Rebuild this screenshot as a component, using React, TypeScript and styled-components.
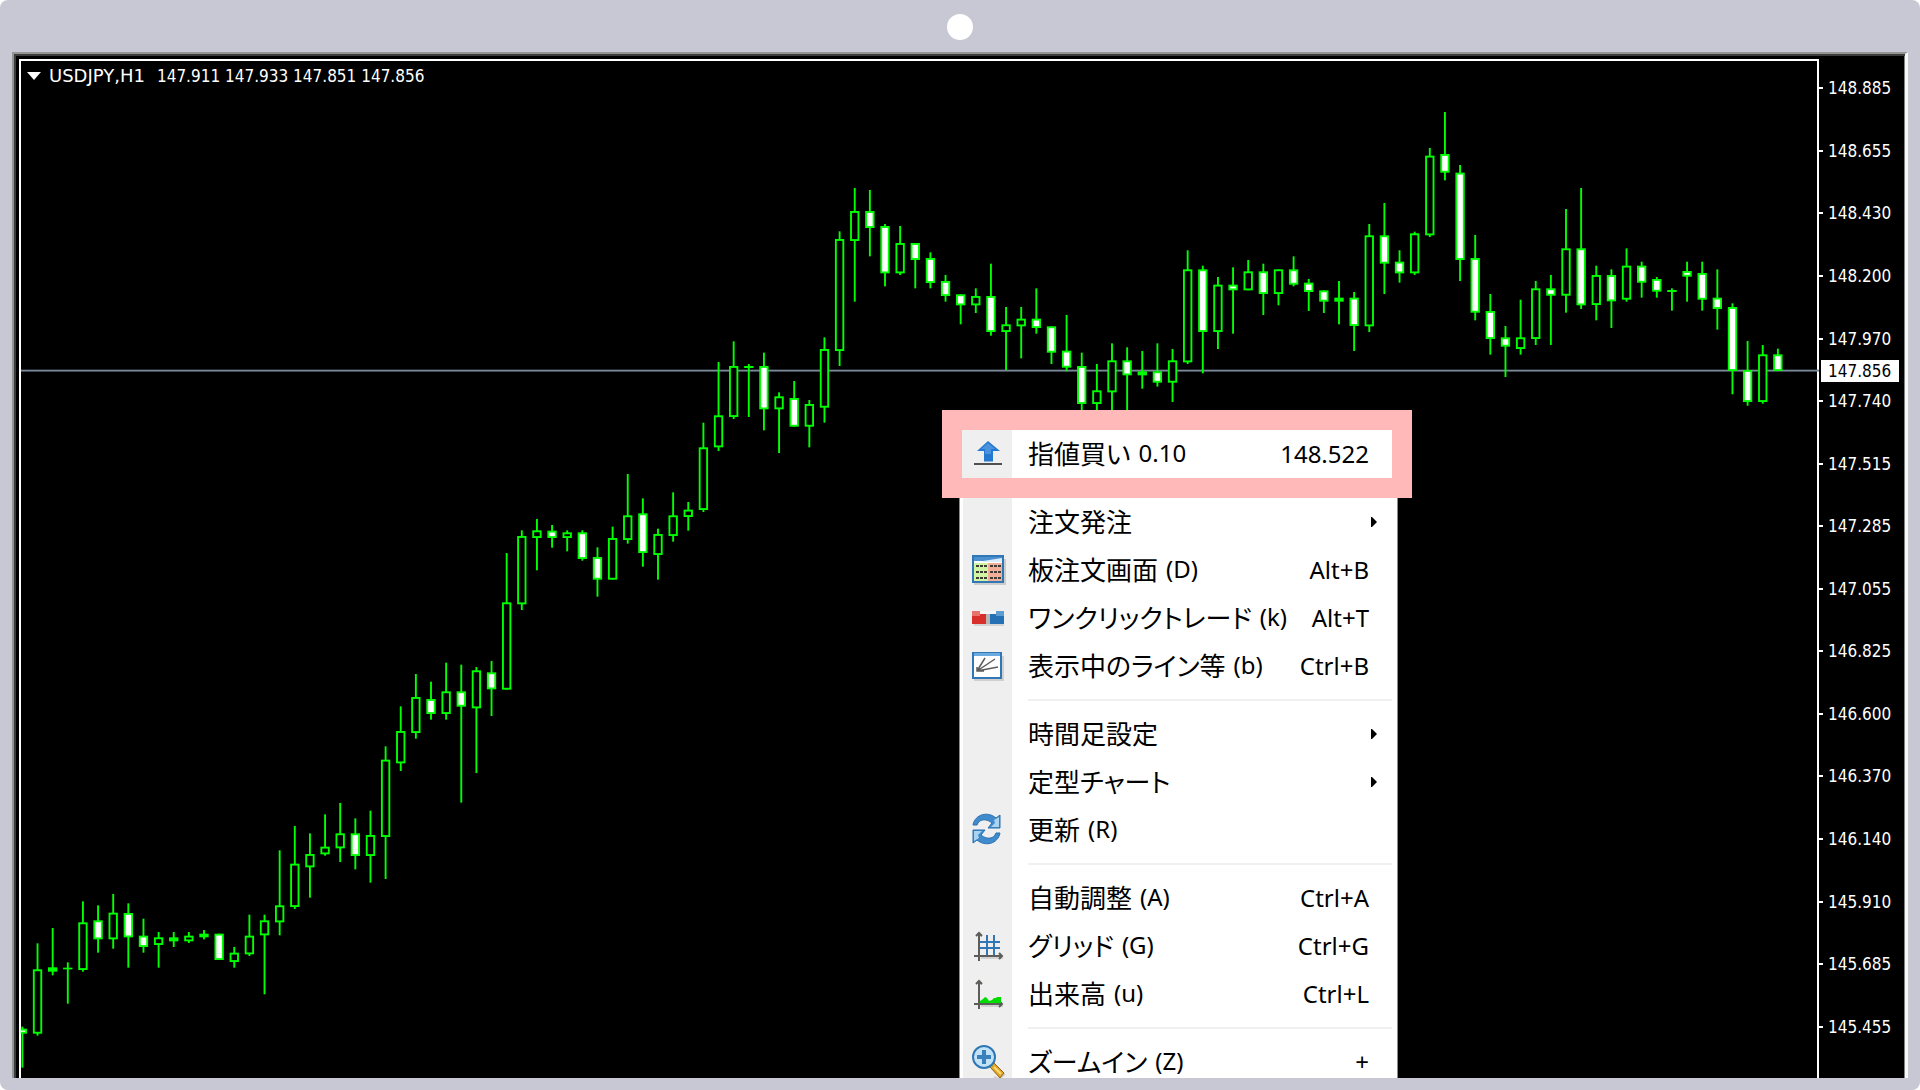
import React from "react";
import styled, { createGlobalStyle, css } from "styled-components";

const GlobalStyle = createGlobalStyle`
  *, *::before, *::after { box-sizing: border-box; }
  body { margin: 0; background: #fff; }
  button { appearance: none; border: 0; margin: 0; padding: 0; background: none; color: inherit; font: inherit; text-align: left; cursor: pointer; }
  ul { margin: 0; padding: 0; list-style: none; }
`;

const chartFont = css`
  font-family: "DejaVu Sans Condensed", "Noto Sans", sans-serif;
  font-size: 17px;
  line-height: 20px;
`;

/* ---------- device frame ---------- */

const Frame = styled.main`
  position: relative;
  display: flex;
  flex-direction: column;
  height: 100vh;
  min-height: 480px;
  padding: 0 12px 12px;
  border-radius: 8px;
  background: #c8c8d4;
  overflow: hidden;
`;

const TopBezel = styled.div`
  display: flex;
  justify-content: center;
  align-items: center;
  flex: 0 0 52px;
  padding-top: 2px;
`;

const Camera = styled.span`
  width: 26px;
  height: 26px;
  border-radius: 50%;
  background: #fff;
`;

const Screen = styled.section`
  position: relative;
  display: flex;
  flex: 1;
  min-height: 0;
  padding: 3px 0 0 3px;
  border: solid #949494;
  border-width: 2px 3px 0 2px;
  border-right-color: #f8f8f8;
  background: #000;
  box-shadow: inset 2px 2px 0 #3c3c3c, inset -1px 0 0 #808080;
  color: #fff;
  overflow: hidden;
`;

const Plot = styled.div`
  display: flex;
  flex-direction: column;
  flex: 1;
  min-width: 0;
  margin: 2px 0 0 2px;
  border: solid #fff;
  border-width: 2px 2px 0 2px;
`;

const PlotArea = styled.div`
  position: relative;
  flex: 1;
  min-height: 0;
`;

const SymbolBar = styled.button`
  ${chartFont}
  position: absolute;
  top: 5px;
  left: 6px;
  display: flex;
  align-items: center;
  white-space: pre;
`;

const SymbolName = styled.span`
  margin: 0 12px 0 8px;
  font-family: "DejaVu Sans", sans-serif;
  font-size: 18px;
`;

const Candles = styled.svg`
  display: block;
  width: 100%;
  height: 100%;
  overflow: visible;
`;

const Axis = styled.aside`
  position: relative;
  flex: 0 0 86px;
  padding-bottom: 20px;
`;

const Scale = styled.ul`
  ${chartFont}
  display: grid;
  grid-auto-rows: 1fr;
  height: 100%;
`;

const Tick = styled.li`
  display: flex;
  align-items: center;
  gap: 5px;

  &::before {
    content: "";
    width: 4px;
    height: 2px;
    background: #fff;
  }
`;

const CurrentPrice = styled.output`
  ${chartFont}
  position: absolute;
  top: 303px;
  left: 2px;
  width: 78px;
  padding: 1px 7px;
  background: #fff;
  color: #000;
`;

/* ---------- context menu ---------- */

const Menu = styled.div`
  position: absolute;
  top: 356px;
  left: 928px;
  width: 470px;
  color: #000;
`;

const IconCell = styled.span`
  display: flex;
  flex: 0 0 49px;
  align-items: center;
  justify-content: center;
  align-self: stretch;
  background: #efefef;
`;

const Highlight = styled.div`
  position: relative;
  border: 20px solid #ffb9b9;
  background: #fff;

  ${IconCell} {
    flex-basis: 50px;
    padding-left: 1px;
  }
`;

const MenuList = styled.ul`
  margin: 0 14px 0 17px;
  padding: 0 5px 0 3px;
  border: solid #8a8a8a;
  border-width: 0 1px;
  background: #fff;
`;

const Row = styled.li`
  display: flex;
`;

const Item = styled.button`
  display: flex;
  align-items: center;
  width: 100%;
  height: 48px;
  padding-right: 23px;
`;

const Label = styled.span`
  flex: 1;
  display: flex;
  align-items: center;
  gap: 8px;
  padding: 0 0 2px 16px;
  font: 26px/30px "Noto Sans CJK JP", sans-serif;
  font-feature-settings: "palt";
  white-space: nowrap;
`;

const Latin = styled.span`
  font: 24px/30px "Noto Sans", "Open Sans", sans-serif;
  white-space: nowrap;
`;

const Submenu = styled.svg`
  width: 6px;
  height: 10px;
  margin-right: -8px;
`;

const Divider = styled.li`
  display: flex;
  align-items: center;
  height: 20px;
  gap: 16px;

  &::after {
    content: "";
    flex: 1;
    height: 2px;
    background: #f0f0f0;
  }
`;

const Icon = styled.svg`
  flex: none;
  width: 36px;
  height: 36px;
`;

type IconName = "buy" | "depth" | "oneClick" | "objects" | "refresh" | "grid" | "volume" | "zoom";

const axes = (
  <>
    <path d="M11 30h22M11 7v2" stroke="#d2d2d2" strokeWidth="2" />
    <path d="M9 5v28M4 28h28M6 8l3-3 3 3M29 25l3 3-3 3" fill="none" stroke="#5c5c58" strokeWidth="2" />
  </>
);

const icons: Record<IconName, React.ReactNode> = {
  buy: (
    <>
      <path d="M18 5 30 15h-7v10.500h-9V15H7z" fill="#2478d0" />
      <path d="M18 7l7 6h-4v5h-6v-5h-4z" fill="#4a92de" />
      <path d="M4 28h28" stroke="#505050" strokeWidth="2" />
    </>
  ),
  depth: (
    <>
      <path d="M4 32h31V7" fill="none" stroke="#ccc" strokeWidth="2" />
      <rect x="3" y="4" width="30" height="26" fill="#fff" stroke="#2f77b5" strokeWidth="2" />
      <path d="M4 5h28v4H4z" fill="#4a90cf" />
      <path d="M13 9l19-3v4H13z" fill="#d8ecfa" />
      <path d="M4 11h14v18H4z" fill="#d2f5a4" />
      <path d="M18 11h14v18H18z" fill="#f3ae9a" />
      <path d="M6 14h11M20 14h11M6 20h11M20 20h11M6 26h11M20 26h11" stroke="#3c3c34" strokeWidth="2" strokeDasharray="3 1" />
    </>
  ),
  oneClick: (
    <>
      <path d="M4 25h30" stroke="#d4d4d4" strokeWidth="2" />
      <path d="M2 11h15v13H2z" fill="#d92f2b" />
      <path d="M2 11h8v5H2z" fill="#e8736c" />
      <path d="M19 11h15v13H19z" fill="#256fb4" />
      <path d="M26 11h8v5h-8z" fill="#5d9bd0" />
      <path d="M10 11h16v3H10z" fill="#f6f6f6" />
      <path d="M16 14h4v10h-4z" fill="#b8b8b8" />
    </>
  ),
  objects: (
    <>
      <path d="M4 32h29V8" fill="none" stroke="#d0d0d0" strokeWidth="2" />
      <rect x="3" y="5" width="28" height="25" fill="#fff" stroke="#2f77b5" strokeWidth="2" />
      <path d="M4 5h26v3H4z" fill="#6aaade" />
      <path d="M7 23 28 19M7 23 25 11M7 23 15 10M7 19v4h7" fill="none" stroke="#5c5c5c" strokeWidth="1.500" />
    </>
  ),
  refresh: (
    <>
      <path d="M3 13C5 2 18-1 26 6l4-3v13H18l4-5C16 6 9 7 7 13z" fill="#3f8bcb" stroke="#2a70b0" />
      <path d="M24 8l5-3v10h-8l4-4z" fill="#a9d3f0" />
      <path d="M30 21C28 32 15 35 7 28l-4 3V18h12l-4 5c6 5 13 4 15-2z" fill="#3f8bcb" stroke="#2a70b0" />
      <path d="M9 26l-5 3V19h8l-4 4z" fill="#a9d3f0" />
    </>
  ),
  grid: (
    <>
      <path d="M17 7v20M24 7v20M10 14h20M10 20h20" stroke="#2f77b5" strokeWidth="2" />
      {axes}
    </>
  ),
  volume: (
    <>
      {axes}
      <path d="M10 27v-2l3-2 2-2 2 1 2 3 3-1 2-2h2l1-1h4v6z" fill="#00dc00" />
    </>
  ),
  zoom: (
    <>
      <path d="M24 33l5 2 6-5" fill="none" stroke="#d0d0d0" strokeWidth="2" />
      <path d="M20 23l4-4 10 10-4 5z" fill="#e2a520" stroke="#8f6415" />
      <path d="M24 23l7 7" stroke="#f8dc80" strokeWidth="2" />
      <circle cx="14" cy="13" r="11" fill="#c2e2f6" stroke="#2f77b5" strokeWidth="2" />
      <path d="M14 6v14M7 13h14" stroke="#3a80ba" strokeWidth="4" />
    </>
  ),
};

type Entry =
  | { kind: "divider" }
  | { kind: "item"; icon?: IconName; name: string; suffix?: string; shortcut?: string; submenu?: boolean };

const featured: Entry = { kind: "item", icon: "buy", name: "指値買い", suffix: "0.10", shortcut: "148.522" };

const entries: Entry[] = [
  { kind: "item", name: "注文発注", submenu: true },
  { kind: "item", icon: "depth", name: "板注文画面", suffix: "(D)", shortcut: "Alt+B" },
  { kind: "item", icon: "oneClick", name: "ワンクリックトレード", suffix: "(k)", shortcut: "Alt+T" },
  { kind: "item", icon: "objects", name: "表示中のライン等", suffix: "(b)", shortcut: "Ctrl+B" },
  { kind: "divider" },
  { kind: "item", name: "時間足設定", submenu: true },
  { kind: "item", name: "定型チャート", submenu: true },
  { kind: "item", icon: "refresh", name: "更新", suffix: "(R)" },
  { kind: "divider" },
  { kind: "item", name: "自動調整", suffix: "(A)", shortcut: "Ctrl+A" },
  { kind: "item", icon: "grid", name: "グリッド", suffix: "(G)", shortcut: "Ctrl+G" },
  { kind: "item", icon: "volume", name: "出来高", suffix: "(u)", shortcut: "Ctrl+L" },
  { kind: "divider" },
  { kind: "item", icon: "zoom", name: "ズームイン", suffix: "(Z)", shortcut: "+" },
];

function MenuEntry({ entry }: { entry: Entry }) {
  if (entry.kind === "divider") return null;
  return (
    <Item type="button" role="menuitem">
      <IconCell>
        {entry.icon && (
          <Icon viewBox="0 0 36 36" aria-hidden="true">
            {icons[entry.icon]}
          </Icon>
        )}
      </IconCell>
      <Label>
        {entry.name}
        {entry.suffix && <Latin>{entry.suffix}</Latin>}
      </Label>
      {entry.shortcut && <Latin>{entry.shortcut}</Latin>}
      {entry.submenu && (
        <Submenu viewBox="0 0 6 10" aria-hidden="true">
          <path d="M0 0h1l5 5-5 5H0z" />
        </Submenu>
      )}
    </Item>
  );
}

/* ---------- price series ---------- */

// Body styles: 0 rising (hollow), 1 falling (white), 2 flat (solid line).
type Candle = [high: number, top: number, bottom: number, low: number, style: 0 | 1 | 2];

// Vertical positions in thirds of a pixel, measured from the top of the window.
const series: Candle[] = [
  [3080, 3086, 3101, 3203, 1], [2830, 2908, 3101, 3107, 0], [2784, 2902, 2915, 2926, 2], [2887, 2903, 2908, 3011, 2],
  [2704, 2767, 2910, 2915, 0], [2716, 2761, 2818, 2858, 1], [2682, 2738, 2818, 2846, 0], [2710, 2739, 2812, 2903, 1],
  [2756, 2807, 2841, 2858, 1], [2796, 2812, 2835, 2903, 0], [2796, 2812, 2824, 2841, 2], [2796, 2807, 2824, 2829, 0],
  [2790, 2801, 2812, 2818, 2], [2801, 2801, 2880, 2880, 1], [2841, 2858, 2886, 2903, 0], [2744, 2807, 2863, 2868, 0],
  [2744, 2761, 2806, 2983, 0], [2551, 2716, 2767, 2806, 0], [2478, 2591, 2721, 2727, 0], [2500, 2562, 2602, 2693, 0],
  [2443, 2540, 2563, 2567, 0], [2409, 2500, 2545, 2586, 0], [2455, 2500, 2568, 2608, 1], [2432, 2505, 2568, 2648, 0],
  [2239, 2279, 2511, 2637, 0], [2119, 2193, 2290, 2313, 0], [2022, 2091, 2199, 2216, 0], [2045, 2097, 2142, 2159, 1],
  [1988, 2074, 2142, 2159, 0], [1994, 2074, 2120, 2408, 1], [2001, 2011, 2125, 2319, 0], [1983, 2017, 2068, 2148, 1],
  [1659, 1807, 2069, 2069, 0], [1591, 1608, 1813, 1830, 0], [1557, 1591, 1614, 1711, 0], [1575, 1592, 1614, 1643, 1],
  [1591, 1597, 1614, 1654, 0], [1591, 1597, 1677, 1682, 1], [1642, 1671, 1739, 1790, 1], [1580, 1614, 1739, 1739, 0],
  [1422, 1546, 1620, 1631, 0], [1495, 1540, 1659, 1700, 1], [1586, 1602, 1665, 1739, 0], [1477, 1546, 1608, 1625, 0],
  [1506, 1529, 1551, 1592, 0], [1268, 1342, 1530, 1536, 0], [1086, 1246, 1342, 1353, 0], [1024, 1098, 1251, 1257, 0],
  [1092, 1098, 1104, 1251, 2], [1058, 1098, 1228, 1291, 1], [1177, 1189, 1228, 1359, 0], [1143, 1194, 1280, 1280, 1],
  [1200, 1212, 1280, 1342, 0], [1012, 1047, 1223, 1268, 0], [694, 717, 1053, 1098, 0], [564, 633, 723, 905, 0],
  [570, 633, 684, 769, 1], [672, 678, 820, 859, 1], [678, 729, 820, 825, 0], [729, 729, 780, 865, 1],
  [757, 774, 849, 865, 1], [825, 843, 888, 905, 1], [883, 883, 916, 973, 1], [865, 888, 916, 939, 0],
  [791, 888, 996, 1007, 1], [921, 973, 996, 1110, 0], [921, 956, 979, 1075, 0], [865, 956, 984, 1001, 1],
  [979, 979, 1058, 1092, 1], [945, 1052, 1103, 1114, 1], [1058, 1098, 1212, 1250, 1], [1092, 1171, 1212, 1250, 0],
  [1030, 1081, 1177, 1250, 0], [1042, 1081, 1126, 1250, 1], [1053, 1114, 1126, 1166, 2], [1030, 1114, 1148, 1160, 1],
  [1047, 1081, 1148, 1206, 0], [751, 808, 1087, 1092, 0], [797, 808, 996, 1120, 1], [831, 854, 996, 1047, 0],
  [802, 854, 871, 1001, 1], [780, 814, 871, 871, 0], [791, 814, 882, 945, 1], [808, 808, 882, 916, 0],
  [769, 808, 854, 859, 1], [837, 848, 876, 933, 1], [871, 871, 905, 939, 1], [843, 893, 905, 973, 2],
  [876, 893, 978, 1053, 1], [672, 706, 979, 996, 0], [609, 706, 791, 882, 1], [751, 785, 820, 848, 1],
  [695, 700, 820, 825, 0], [444, 467, 706, 711, 0], [336, 462, 518, 541, 1], [495, 518, 780, 843, 1],
  [705, 774, 938, 961, 1], [882, 933, 1017, 1064, 1], [978, 1012, 1040, 1131, 1], [899, 1012, 1047, 1064, 0],
  [843, 865, 1017, 1035, 0], [825, 865, 887, 1035, 1], [627, 745, 887, 938, 0], [564, 745, 916, 927, 1],
  [797, 825, 915, 961, 0], [808, 825, 904, 984, 1], [745, 797, 899, 905, 0], [785, 797, 848, 893, 1],
  [831, 837, 875, 893, 1], [865, 870, 876, 932, 2], [785, 813, 830, 905, 1], [785, 819, 899, 932, 1],
  [808, 893, 927, 989, 1], [910, 921, 1113, 1183, 1], [1023, 1110, 1206, 1217, 1], [1035, 1063, 1206, 1211, 0],
  [1046, 1063, 1113, 1113, 1],
];

const STEP = 45.4;
const FIRST = 67.2;
const BODY = 28;
const LINE = 5.67;
const fills = ["#000", "#fff", "#0f0"];

function CandleShape({ index, candle }: { index: number; candle: Candle }) {
  const [high, top, bottom, low, style] = candle;
  const x = FIRST + index * STEP;
  // The oldest candle is cut off by the left edge of the plot.
  const left = index === 0 ? 62 : x - BODY / 2;
  const width = x + BODY / 2 - left;
  const inner = Math.max(0, bottom - top - LINE * 2);
  return (
    <g>
      <rect x={x - LINE / 2} y={high} width={LINE} height={low - high} fill="#0f0" />
      <rect x={left} y={top} width={width} height={bottom - top} fill="#0f0" />
      {style !== 2 && (
        <rect
          x={index === 0 ? left : left + LINE}
          y={top + LINE}
          width={index === 0 ? width - LINE : width - LINE * 2}
          height={inner}
          fill={fills[style]}
        />
      )}
    </g>
  );
}

const ticks = [
  "148.885", "148.655", "148.430", "148.200", "147.970", "147.740", "147.515", "147.285",
  "147.055", "146.825", "146.600", "146.370", "146.140", "145.910", "145.685", "145.455",
];

export default function App() {
  return (
    <>
      <GlobalStyle />
      <Frame>
        <TopBezel>
          <Camera />
        </TopBezel>
        <Screen>
          <Plot>
            <PlotArea>
              <Candles viewBox="63 183 5388 3051" preserveAspectRatio="none" role="img" aria-label="USDJPY H1">
                <rect x="63" y="1109" width="5394" height="5.670" fill="#778899" />
                {series.map((candle, index) => (
                  <CandleShape key={index} index={index} candle={candle} />
                ))}
              </Candles>
              <SymbolBar type="button">
                <svg width="14" height="8" viewBox="0 0 14 8" aria-hidden="true">
                  <path d="M0 0h14L7 8z" fill="#fff" />
                </svg>
                <SymbolName>USDJPY,H1</SymbolName>
                147.911 147.933 147.851 147.856
              </SymbolBar>
            </PlotArea>
          </Plot>
          <Axis>
            <Scale>
              {ticks.map((tick) => (
                <Tick key={tick}>{tick}</Tick>
              ))}
            </Scale>
            <CurrentPrice>147.856</CurrentPrice>
          </Axis>
          <Menu role="menu">
            <Highlight>
              <MenuEntry entry={featured} />
            </Highlight>
            <MenuList role="none">
              {entries.map((entry, index) =>
                entry.kind === "divider" ? (
                  <Divider key={index} role="separator">
                    <IconCell />
                  </Divider>
                ) : (
                  <Row key={index} role="none">
                    <MenuEntry entry={entry} />
                  </Row>
                )
              )}
            </MenuList>
          </Menu>
        </Screen>
      </Frame>
    </>
  );
}
